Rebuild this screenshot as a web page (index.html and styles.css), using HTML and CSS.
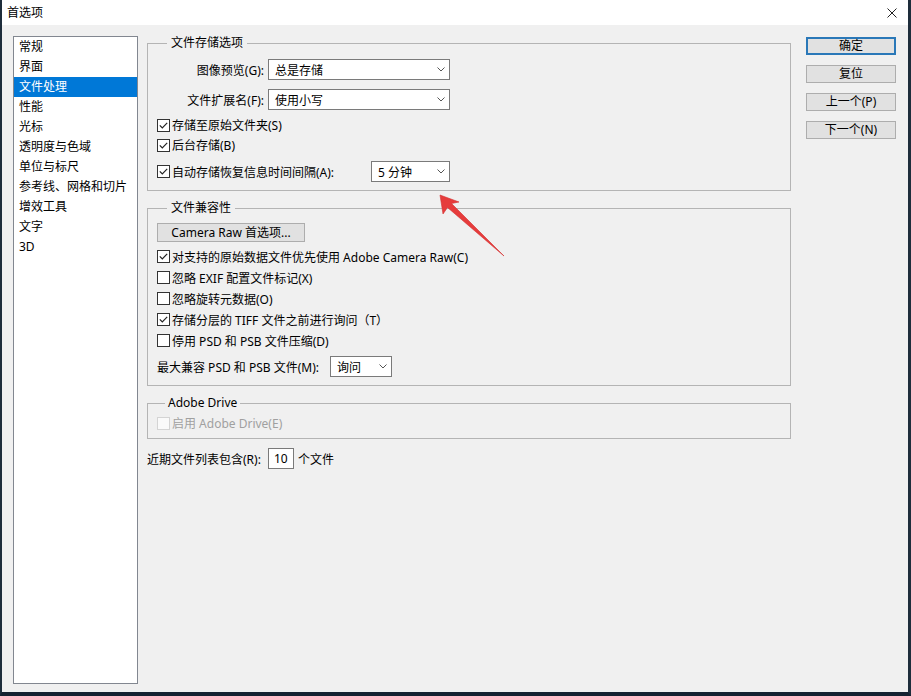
FILE: index.html
```html
<!DOCTYPE html>
<html lang="zh-CN">
<head>
<meta charset="utf-8">
<title>首选项</title>
<link rel="stylesheet" href="styles.css">
</head>
<body>
<div class="window">
  <div class="titlebar">
    <span class="title">首选项</span>
    <svg class="close" width="10" height="10" viewBox="0 0 10 10"><path d="M0.5 0.5L9.5 9.5M9.5 0.5L0.5 9.5"/></svg>
  </div>
  <div class="content">
    <ul class="nav">
      <li>常规</li>
      <li>界面</li>
      <li class="active">文件处理</li>
      <li>性能</li>
      <li>光标</li>
      <li>透明度与色域</li>
      <li>单位与标尺</li>
      <li>参考线、网格和切片</li>
      <li>增效工具</li>
      <li>文字</li>
      <li>3D</li>
    </ul>

    <div class="main">
      <fieldset class="group g1">
        <legend>文件存储选项</legend>
        <div class="frow mt9">
          <span class="lbl">图像预览(G):</span>
          <div class="select w182"><span>总是存储</span><svg class="chev" width="8" height="5" viewBox="0 0 8 5"><path d="M0.5 0.5L4 4L7.5 0.5"/></svg></div>
        </div>
        <div class="frow mt9">
          <span class="lbl">文件扩展名(F):</span>
          <div class="select w182"><span>使用小写</span><svg class="chev" width="8" height="5" viewBox="0 0 8 5"><path d="M0.5 0.5L4 4L7.5 0.5"/></svg></div>
        </div>
        <div class="crow mt5">
          <span class="cb"><svg width="9" height="7" viewBox="0 0 9 7"><path d="M0.8 3.3L3.3 5.8L8.2 0.8"/></svg></span>
          <span>存储至原始文件夹(S)</span>
        </div>
        <div class="crow">
          <span class="cb"><svg width="9" height="7" viewBox="0 0 9 7"><path d="M0.8 3.3L3.3 5.8L8.2 0.8"/></svg></span>
          <span>后台存储(B)</span>
        </div>
        <div class="frow auto mt6">
          <span class="cb"><svg width="9" height="7" viewBox="0 0 9 7"><path d="M0.8 3.3L3.3 5.8L8.2 0.8"/></svg></span>
          <span>自动存储恢复信息时间间隔(A):</span>
          <div class="select w79 push"><span>5 分钟</span><svg class="chev" width="8" height="5" viewBox="0 0 8 5"><path d="M0.5 0.5L4 4L7.5 0.5"/></svg></div>
        </div>
      </fieldset>

      <fieldset class="group g2">
        <legend>文件兼容性</legend>
        <button class="btn cr">Camera Raw 首选项...</button>
        <div class="crow tall mt4">
          <span class="cb"><svg width="9" height="7" viewBox="0 0 9 7"><path d="M0.8 3.3L3.3 5.8L8.2 0.8"/></svg></span>
          <span>对支持的原始数据文件优先使用 Adobe Camera Raw(C)</span>
        </div>
        <div class="crow tall">
          <span class="cb"></span>
          <span>忽略 EXIF 配置文件标记(X)</span>
        </div>
        <div class="crow tall">
          <span class="cb"></span>
          <span>忽略旋转元数据(O)</span>
        </div>
        <div class="crow tall">
          <span class="cb"><svg width="9" height="7" viewBox="0 0 9 7"><path d="M0.8 3.3L3.3 5.8L8.2 0.8"/></svg></span>
          <span>存储分层的 TIFF 文件之前进行询问（T）</span>
        </div>
        <div class="crow tall">
          <span class="cb"></span>
          <span>停用 PSD 和 PSB 文件压缩(D)</span>
        </div>
        <div class="frow mt5">
          <span class="lbl-inline">最大兼容 PSD 和 PSB 文件(M):</span>
          <div class="select w62"><span>询问</span><svg class="chev" width="8" height="5" viewBox="0 0 8 5"><path d="M0.5 0.5L4 4L7.5 0.5"/></svg></div>
        </div>
      </fieldset>

      <fieldset class="group g3">
        <legend>Adobe Drive</legend>
        <div class="crow disabled mt3">
          <span class="cb"></span>
          <span>启用 Adobe Drive(E)</span>
        </div>
      </fieldset>

      <div class="recent">
        <span class="recent-lbl">近期文件列表包含(R):</span>
        <span class="num">10</span>
        <span class="unit">个文件</span>
      </div>
    </div>

    <div class="side">
      <button class="btn default">确定</button>
      <button class="btn">复位</button>
      <button class="btn">上一个(P)</button>
      <button class="btn">下一个(N)</button>
    </div>
  </div>

  <svg class="arrow" width="76" height="72" viewBox="0 0 76 72">
    <polygon points="4,5 23,12 15.5,13.5 68,66 11.5,17.5 7,24"/>
  </svg>
</div>
</body>
</html>
```

FILE: styles.css
```css
* { box-sizing: border-box; }
html, body { margin: 0; padding: 0; }
body {
  width: 911px;
  height: 696px;
  overflow: hidden;
  background: #1a2633;
  font-family: "Noto Sans", "Noto Sans CJK SC", sans-serif;
  font-size: 12px;
  color: #000;
}
.window {
  position: relative;
  width: 911px;
  height: 696px;
  background: #f0f0f0;
  border-left: 2px solid #1e2d3b;
  border-right: 3px solid #1e2d3b;
  border-bottom: 4px solid #152231;
  display: flex;
  flex-direction: column;
}
.titlebar {
  flex: none;
  height: 25px;
  background: #fff;
  display: flex;
  align-items: center;
  justify-content: space-between;
  padding: 0 11px 0 5px;
}
.title { line-height: 16px; }
.close path { stroke: #222; stroke-width: 1; fill: none; }

.content {
  flex: 1;
  min-height: 0;
  display: flex;
  padding: 11px 12px 8px 11px;
}
.nav {
  flex: none;
  width: 125px;
  margin: 0;
  padding: 0;
  list-style: none;
  background: #fff;
  border: 1px solid #828790;
}
.nav li {
  height: 20px;
  line-height: 20px;
  padding-left: 5px;
  white-space: nowrap;
}
.nav li.active { background: #0078d7; color: #fff; }

.main {
  flex: none;
  align-self: flex-start;
  width: 644px;
  margin-left: 9px;
  display: flex;
  flex-direction: column;
}
.group {
  margin: 0;
  padding: 0 8px 8px 9px;
  border: 1px solid #b4b4b4;
  min-width: 0;
}
.group legend {
  margin-left: 10px;
  padding: 0 4px;
  height: 14px;
  line-height: 14px;
}
.g3 legend { margin-left: 8px; padding: 0 3px; }
.g2, .g3 { margin-top: 10px; }
.g3 { padding-bottom: 5px; }

.frow {
  display: flex;
  align-items: center;
  height: 21px;
  white-space: nowrap;
}
.lbl {
  width: 107px;
  margin-right: 4px;
  text-align: right;
}
.lbl-inline { margin-right: 11px; }
.auto { width: 293px; }
.push { margin-left: auto; }

.crow {
  display: flex;
  align-items: center;
  height: 20px;
  white-space: nowrap;
}
.crow.tall { height: 21px; }
.cb {
  flex: none;
  width: 13px;
  height: 13px;
  margin-right: 2px;
  border: 1px solid #333;
  background: #fff;
  display: flex;
  align-items: center;
  justify-content: center;
}
.cb path { fill: none; stroke: #222; stroke-width: 1.2; }
.disabled { color: #a0a0a0; }
.disabled .cb { border-color: #d4d4d4; background: #fafafa; }

.select {
  height: 21px;
  border: 1px solid #7a7a7a;
  background: #fff;
  display: flex;
  align-items: center;
  justify-content: space-between;
  padding: 0 4px 0 6px;
}
.chev path { fill: none; stroke: #555; stroke-width: 1; }
.w182 { width: 182px; }
.w79 { width: 79px; }
.w62 { width: 62px; }

.mt3 { margin-top: 3px; }
.mt4 { margin-top: 4px; }
.mt5 { margin-top: 5px; }
.mt6 { margin-top: 6px; }
.mt9 { margin-top: 9px; }

.btn {
  font: inherit;
  color: #000;
  height: 18px;
  padding: 0;
  border: 1px solid #adadad;
  background: #e1e1e1;
  display: flex;
  align-items: center;
  justify-content: center;
  line-height: 16px;
}
.btn.cr {
  width: 148px;
  height: 19px;
  margin-top: 8px;
}
.btn.default { border: 2px solid #2a78b8; }

.recent {
  margin-top: 9px;
  display: flex;
  align-items: center;
  height: 21px;
  white-space: nowrap;
}
.recent-lbl { width: 121px; }
.num {
  width: 26px;
  height: 21px;
  border: 1px solid #7a7a7a;
  background: #fff;
  padding-left: 5px;
  display: flex;
  align-items: center;
}
.unit { margin-left: 4px; }

.side {
  flex: none;
  align-self: flex-start;
  width: 90px;
  margin-left: 15px;
  padding-top: 1px;
  display: flex;
  flex-direction: column;
  gap: 10px;
}

.arrow {
  position: absolute;
  left: 434px;
  top: 190px;
  pointer-events: none;
}
.arrow polygon { fill: #e63c3c; stroke: #d32f2f; stroke-width: 0.6; stroke-linejoin: round; }
```
